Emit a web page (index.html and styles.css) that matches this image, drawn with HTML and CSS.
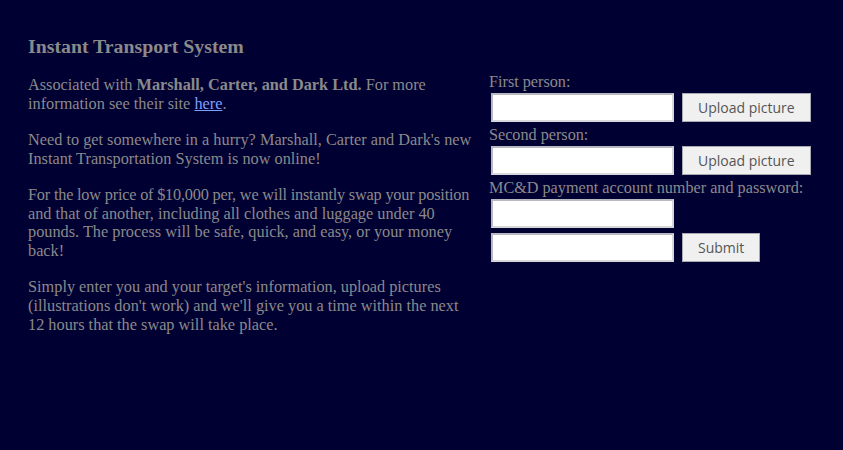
FILE: index.html
```html
<!DOCTYPE html>
<html lang="en">
<head>
<meta charset="utf-8">
<title>Instant Transport System</title>
<link rel="stylesheet" href="styles.css">
</head>
<body>
<div class="page">
  <h1 class="title">Instant Transport System</h1>
  <div class="columns">
    <div class="info">
      <p>Associated with <b>Marshall, Carter, and Dark Ltd.</b> For more information see their site <a href="#">here</a>.</p>
      <p>Need to get somewhere in a hurry? Marshall, Carter and Dark's new Instant Transportation System is now online!</p>
      <p><span class="tight">For the low price of $10,000 per, we will instantly swap your position</span><br>and that of another, including all clothes and luggage under 40 pounds. The process will be safe, quick, and easy, or your money back!</p>
      <p>Simply enter you and your target's information, upload pictures (illustrations don't work) and we'll give you a time within the next 12 hours that the swap will take place.</p>
    </div>
    <form class="form">
      <label class="label">First person:</label>
      <div class="row"><input class="field" type="text"><button class="btn" type="button">Upload picture</button></div>
      <label class="label">Second person:</label>
      <div class="row"><input class="field" type="text"><button class="btn" type="button">Upload picture</button></div>
      <label class="label">MC&amp;D payment account number and password:</label>
      <div class="row"><input class="field" type="text"></div>
      <div class="row row-last"><input class="field" type="password"><button class="btn" type="button">Submit</button></div>
    </form>
  </div>
</div>
</body>
</html>
```
FILE: styles.css
```css
html, body {
  margin: 0;
  padding: 0;
  background: #010033;
  height: 100%;
}
body {
  font-family: "Liberation Serif", "Times New Roman", serif;
  color: #8a8a8a;
}
.page {
  padding: 35px 28px 0 28px;
}
.title {
  margin: 0;
  font-size: 19.8px;
  line-height: 22px;
  font-weight: bold;
  color: #8a8a8a;
}
.columns {
  display: flex;
  gap: 16px;
  margin-top: 15px;
}
.info {
  width: 445px;
  flex: none;
  padding-top: 4px;
  font-size: 16.3px;
  line-height: 18.7px;
}
.info p {
  margin: 0 0 17.5px 0;
}
.info b {
  font-weight: bold;
}
.info a {
  color: #7f9fff;
  text-decoration: underline;
}
.tight {
  white-space: nowrap;
  letter-spacing: -0.2px;
}
.form {
  display: flex;
  flex-direction: column;
  margin: 0;
  font-size: 16.2px;
}
.label {
  line-height: 20px;
}
.row {
  display: flex;
  gap: 8px;
  margin: 1px 0 3px 2px;
}
.row-last {
  margin-top: 2px;
}
.field {
  box-sizing: border-box;
  width: 183px;
  height: 29px;
  margin: 0;
  padding: 0 4px;
  background: #ffffff;
  border: 2px solid #c8c8d0;
  border-color: #b8b8c0 #d8d8dc #d8d8dc #b8b8c0;
}
.btn {
  box-sizing: border-box;
  height: 29px;
  padding: 0 15px;
  margin: 0;
  font-family: "Open Sans", "Noto Sans", sans-serif;
  font-size: 14px;
  color: #555555;
  background: #f0f0f0;
  border: 1px solid #a8a8b0;
  border-radius: 0;
}
```
